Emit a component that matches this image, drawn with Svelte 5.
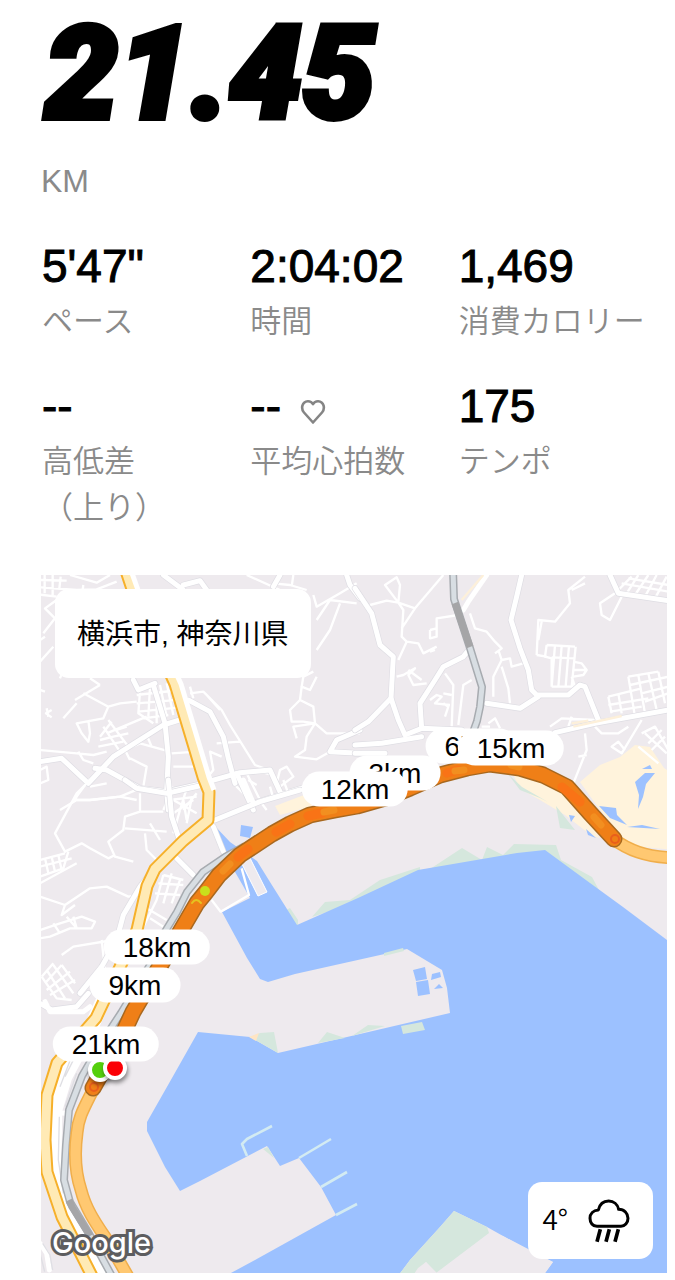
<script>
  const stats = [
    { value: `5'47"`, label: 'ペース' },
    { value: '2:04:02', label: '時間' },
    { value: '1,469', label: '消費カロリー' },
    { value: '--', label: '高低差（上り）' },
    { value: '--', label: '平均心拍数', heart: true },
    { value: '175', label: 'テンポ' }
  ];

  const mapWidth = 626;
  const mapHeight = 698;
  // Marker centres, in map units
  const markers = [
    { text: '3km', x: 354, y: 198 },
    { text: '12km', x: 314, y: 214 },
    { text: '6km', x: 430, y: 171 },
    { text: '15km', x: 470, y: 173 },
    { text: '18km', x: 116, y: 372 },
    { text: '9km', x: 94, y: 410 },
    { text: '21km', x: 65, y: 469 }
  ];

  const route =
    'M93 1088 L120 1040 L133 1012 L183 927 L197 903 L206 892 L219 875 L240 855 L272 834 L290 824 L310 815 L335 810 L357 806 L385 798 L410 788 L440 775 L467 768 L490 764 L520 768 L543 775 L567 787 L590 813 L614 839';
  const highwaySouth =
    'M93 1090 C84 1108 78 1118 77 1133 C74 1155 75 1172 81 1190 C86 1210 97 1225 107 1240 L130 1280';
  const highwayEast = 'M612 838 C628 850 645 857 675 858';
  const yellowRoad =
    'M124 565 L133 592 L175 684 L203 777 L209 792 L208 820 L183 841 L155 869 L147 886 L137 930 L120 967 L96 1018 L57 1063 L47 1095 L45 1140 L47 1172 L62 1217 L94 1280';
  const coastRail =
    'M245 846 L225 857 L203 872 L187 892 L177 912 L166 930 L150 965 L121 1013 L100 1045 L82 1076 L69 1110 L66 1145 L64 1180 L70 1202 L88 1232 L114 1280';
  const hillRail = 'M453 570 L454 599 L470 648 L482 687 L480 707 L477 721 L472 735';
</script>

<main class="run">
  <h1 class="distance">21.45</h1>
  <p class="unit">KM</p>

  <dl class="stats">
    {#each stats as stat}
      <div class="stat">
        <dd class="value">
          <span>{stat.value}</span>
          {#if stat.heart}
            <svg class="heart" viewBox="0 0 26 26" aria-hidden="true">
              <path d="M13 23.5 L4 13.5 C0.5 9.3 2.2 2.5 7.8 2.2 C10.2 2.1 12 3.4 13 5.2 C14 3.4 15.8 2.1 18.2 2.2 C23.8 2.5 25.5 9.3 22 13.5 Z" />
            </svg>
          {/if}
        </dd>
        <dt class="label">{stat.label}</dt>
      </div>
    {/each}
  </dl>

  <section class="map" aria-label="ルート">
    <svg class="canvas" viewBox="41 575 626 698" aria-hidden="true">
      <rect class="land" x="41" y="575" width="626" height="698" />

      <!-- sand and parks -->
      <path class="sand" d="M580 782 L600 765 L620 757 L635 745 L650 747 L664 768 L675 775 L675 850 L630 846 L600 810 Z" />
      <path class="sand" d="M512 772 L545 782 L570 795 L600 838 L592 836 L565 815 L540 800 L520 789 Z" />
      <path class="sand" d="M275 806 L312 792 L312 806 L280 815 Z" />
      <path class="park" d="M508 774 L522 787 L548 802 L540 798 L520 790 Z M556 806 L575 830 L560 828 Z" />
      <path class="park" d="M430 869 L462 848 L482 860 L487 847 L503 855 L514 844 L556 845 L561 860 L592 877 L600 892 L545 856 Z" />
      <path class="park" d="M312 917 L325 902 L350 900 L380 880 L420 867 L420 873 L358 902 Z" />
      <path class="park" d="M286 910 L290 908 L298 920 L298 930 L291 921 Z" />
      <path class="water" d="M655 773 L646 784 L643 797 L638 809 L639 795 L635 782 L645 773 Z M642 769 L650 765 L652 769 Z M599 806 L616 808 L617 815 L627 825 L610 818 Z M627 827 L642 825 L660 829 Z M569 815 L575 816 L571 822 Z M586 829 L596 838 L588 835 Z" />

      <!-- bay -->
      <path class="water" d="M213 824 L230 842 L257 861 L270 882 L297 925 L358 898 L418 870 L517 853 L545 850 L590 883 L623 907 L675 946 L675 1280 L540 1280 L553 1262 L528 1250 L503 1236 L487 1227 L454 1211 L440 1227 L410 1260 L395 1280 L218 1280 L255 1260 L336 1215 L321 1187 L299 1158 L280 1166 L267 1146 L200 1181 L180 1191 L165 1167 L147 1131 L147 1122 L172 1078 L198 1032 L250 1037 L278 1053 L347 1037 L450 1013 L447 988 L442 970 L407 949 L295 974 L268 982 L260 979 L247 958 L222 912 L250 898 L242 884 L224 853 Z" />
      <path class="water" d="M241 825 L253 827 L250 838 L240 836 Z" />
      <path class="quay" d="M239 858 L250 858 L267 892 L258 896 Z" />
      <path class="park" d="M384 953 L403 948 L404 951 L384 956 Z M250 1037 L260 1033 L274 1032 L278 1053 Z M318 1043 L327 1032 L345 1038 Z M352 1036 L368 1025 L385 1026 Z M401 1026 L422 1022 L425 1030 L403 1034 Z M263 1149 L268 1147 L274 1158 Z" />
      <path class="sand-deep" d="M249 1037 L259 1033 L256 1041 Z" />
      <path class="park" d="M395 1280 L410 1260 L440 1227 L454 1211 L487 1227 L489 1233 L436 1273 L426 1262 L418 1268 L410 1280 Z" />
      <path class="land" d="M410 1280 L426 1262 L437 1273 L490 1233 L503 1236 L553 1262 L540 1280 Z" />
      <path class="water" d="M413 970 L425 967 L427 979 L416 981 Z M416 982 L428 980 L430 994 L418 996 Z M432 974 L440 972 L441 977 L431 980 Z M434 989 L439 984 L443 988 Z" />
      <path class="pier" d="M247 1156 L242 1144 L247 1139 L272 1126 M299 1158 L331 1139 M321 1187 L347 1172 M336 1215 L357 1204" />

      <!-- hillside streets, north west -->
      <g transform="translate(40 570) scale(0.33333)">
        <g class="street">
          <path d="M0 52 L110 60 L170 58 L230 35 M0 30 L80 32 M0 74 L50 80 M14 15 V70 M38 15 V75 M62 20 L58 56 M130 45 L128 60 M90 15 L170 38 L210 15" />
          <path d="M50 90 L15 115 L45 145 L10 190 M0 275 L40 230 M15 200 L0 210 M0 360 L15 365 M35 420 L18 430 L35 442 M20 415 L25 440" />
          <path d="M60 325 L70 300 M105 390 L180 345 M130 370 L205 410 L240 400 L290 395 M205 410 L190 445 L110 460 L125 490 L145 515 L150 490 L145 450 M110 400 L70 445 M180 345 L150 325" />
          <path d="M300 365 L295 430 L340 460 M330 350 L325 440 M290 375 L420 360 M290 400 L430 388 M295 425 L420 412 M380 340 L400 435 M360 345 L380 440 M310 445 L385 435 M350 370 L350 460" />
          <path d="M205 450 L265 530 M190 470 L240 545 M180 510 L220 500 L265 490 M175 530 L250 515 M215 455 L180 500 M320 440 L200 490 M230 480 L260 470" />
          <path d="M0 540 L110 550 L160 555 L200 545 M115 545 L130 570 L160 580 M270 570 L255 540 L300 520 L390 545 M270 565 L320 590 L310 650 M320 495 L335 530" />
          <path d="M450 370 L490 365 L545 420 L570 465 L645 585 L700 605 M450 350 L460 385 M500 375 L540 420 M530 520 L600 515 M395 550 L470 545 M400 590 L470 590 M545 560 L510 545 L520 600 L500 625" />
          <path d="M620 610 L665 700 L680 720 M640 600 L700 615 M720 650 L760 620 L740 590 L720 600 L710 640 M585 645 L640 700" />
          <path d="M150 625 L110 680 L105 690 L150 690 L240 680 L300 655 M110 690 L60 720 M0 600 L20 590 L25 630 L0 640 M150 650 L200 640" />
          <path d="M820 75 L830 110 L900 70 L950 40 M830 150 L870 90 L950 100 M830 240 L870 180 L900 100 M700 40 L750 45 L800 60 M760 15 L755 50 M620 15 L720 60" />
          <path d="M820 305 L790 320 L785 350 L810 360 L830 320 M785 350 L780 390 L820 410 L825 460 L760 470 L770 505 M780 390 L750 420 L755 455 L790 455 L825 460 L860 490 L960 490 M825 460 L800 500 L795 540 L765 560 L830 568 L870 545" />
          <path d="M400 650 L370 720 M440 655 L420 720 M390 690 L470 680 M430 720 L470 670" />
        </g>
        <g class="avenue-edge">
          <path d="M0 575 L65 565 L145 640 L220 560 L370 465 L425 448" />
          <path d="M165 595 L200 600 L300 655 L380 665 L490 640" />
          <path d="M340 345 L375 460 L385 560 L380 665 L385 720" />
          <path d="M280 330 L295 360 L345 340 M445 390 L510 425 L550 500 L565 565 L585 640" />
          <path d="M515 632 L600 608 L690 600 L720 665 M590 610 L640 720 M640 700 L800 650" />
          <path d="M370 15 L430 60 M430 45 L480 32 L500 60 M920 15 L930 45 L960 85 M700 50 L720 15 M960 480 L890 510 L870 545 L960 550" />
        </g>
        <g class="avenue">
          <path d="M0 575 L65 565 L145 640 L220 560 L370 465 L425 448" />
          <path d="M165 595 L200 600 L300 655 L380 665 L490 640" />
          <path d="M340 345 L375 460 L385 560 L380 665 L385 720" />
          <path d="M280 330 L295 360 L345 340 M445 390 L510 425 L550 500 L565 565 L585 640" />
          <path d="M515 632 L600 608 L690 600 L720 665 M590 610 L640 720 M640 700 L800 650" />
          <path d="M370 15 L430 60 M430 45 L480 32 L500 60 M920 15 L930 45 L960 85 M700 50 L720 15 M960 480 L890 510 L870 545 L960 550" />
        </g>
      </g>

      <!-- hillside streets, north east -->
      <g transform="translate(355 570) scale(0.33333)">
        <g class="street">
          <path d="M45 105 L95 92 L130 98 L180 115 L265 15 M130 98 L90 45 L125 22 L135 45 L130 98 L145 120 L140 200 L155 215 L130 270 M180 115 L140 175 M155 215 L190 220 L205 250 L245 230 M225 245 L240 240" />
          <path d="M225 180 L245 175 L245 145 L310 135 M225 180 L225 205 L245 200 L245 175 M125 320 L145 315 L180 295 L160 315 L175 345 L215 340 M200 330 L160 300" />
          <path d="M225 390 L245 375 L260 380 L240 400 L285 405 M265 370 L290 375 M270 310 L295 345 L290 470 M265 400 L280 410 L270 440 M310 465 L325 345 L350 330" />
          <path d="M345 130 L360 175 L395 185 L420 215 L440 235 L420 250 M430 240 L440 270 L415 320 L415 380 M440 270 L465 265 L470 290 L505 280 M440 290 L460 355 L465 400" />
          <path d="M545 255 L550 150 L600 155 L645 100 L640 60 L690 20 M545 255 L575 260 M690 40 L650 60 M560 155 L550 210" />
          <path d="M575 225 L660 230 M575 225 L570 260 L590 265 L590 350 M600 225 L590 350 M620 228 L610 352 M642 228 L632 350 M662 230 L650 350 M590 350 L660 350 L650 320 M590 262 L660 265 M655 275 L680 280 L695 300 L685 315 L655 320 M655 300 L695 300" />
          <path d="M780 70 L735 100 L740 135 L765 150 L800 80 M790 60 L830 20 M815 70 L850 15 M840 75 L880 15 M870 80 L905 15 M900 85 L935 20 M800 40 L940 65 M820 25 L940 45" />
          <path d="M760 380 L860 355 M760 405 L880 385 M765 425 L860 410 M760 380 L770 430 M790 370 L800 430 M820 320 L840 440 M820 320 L910 305 M850 315 L870 430 M880 310 L905 420 M825 345 L940 320 M860 370 L940 350 M870 395 L940 370 M910 305 L930 400" />
          <path d="M585 470 L620 445 L720 450 M640 470 L650 440 M720 470 L740 490 L790 490 L820 470 M860 450 L800 550 L770 530 L790 515 L810 540 M870 490 L935 550 M880 520 L920 480 M890 540 L930 500 M860 490 L900 470 L940 540 M850 530 L910 580 M690 490 L695 540 L655 640 M695 555 L670 560" />
          <path d="M400 460 L420 445 L435 475 M405 470 L380 470" />
        </g>
        <g class="avenue-edge">
          <path d="M0 55 L50 130 L75 225 L115 260 L108 385 L130 450 L150 495 L200 475 L320 480" />
          <path d="M108 385 L40 455 L0 480 M200 475 L195 400 L240 330 L265 290 L325 260 L345 235" />
          <path d="M500 15 L485 80 L468 150 L495 235 L520 300 L530 360 L545 375 L640 375 L675 345 L690 350 L730 450 M395 400 L450 408 L495 415 L550 380" />
          <path d="M765 15 L790 70 L940 92 M0 525 L80 520 L200 500 M0 550 L90 550 M600 488 L720 460 L940 420" />
        </g>
        <g class="avenue">
          <path d="M0 55 L50 130 L75 225 L115 260 L108 385 L130 450 L150 495 L200 475 L320 480" />
          <path d="M108 385 L40 455 L0 480 M200 475 L195 400 L240 330 L265 290 L325 260 L345 235" />
          <path d="M500 15 L485 80 L468 150 L495 235 L520 300 L530 360 L545 375 L640 375 L675 345 L690 350 L730 450 M395 400 L450 408 L495 415 L550 380" />
          <path d="M765 15 L790 70 L940 92 M0 525 L80 520 L200 500 M0 550 L90 550 M600 488 L720 460 L940 420" />
          <path d="M395 15 L340 95 L325 120" />
        </g>
        <path class="ramp" d="M385 15 L320 90 M650 460 L700 452 M655 470 L800 438" />
      </g>

      <!-- western streets -->
      <g transform="translate(40 780) scale(0.33333)">
        <g class="street">
          <path d="M150 0 L110 40 L45 160 L75 215 L125 190 L150 205 L205 235 L225 225 M110 60 L150 60 L240 50 L290 60 M300 40 L300 95 L255 110 L250 150 L205 185 L225 230 L280 245 M300 95 L370 95 M255 145 L380 155 M315 160 L320 210 L350 240 M330 130 L360 180" />
          <path d="M0 240 L75 220 M0 260 L95 235 M0 290 L70 265 L85 215 M15 235 L25 280 M35 230 L45 275 M55 225 L65 270 M0 310 L110 250" />
          <path d="M0 350 L75 375 L150 325 L200 320 L265 350 L300 345 M75 375 L65 405 L105 375 M0 450 L60 430 L125 410 L165 425 L155 445 L90 445 L30 470 L0 475 M40 430 L60 460 M100 410 L110 445 L80 410" />
          <path d="M65 525 L100 500 L220 480 M185 480 L195 570 L150 600" />
          <path d="M40 550 L5 590 M65 555 L15 610 M90 575 L20 630 M105 600 L30 645 M5 590 L50 655 L95 660 M20 570 L75 655 M40 555 L100 640 M65 555 L105 610" />
          <path d="M370 285 L350 360 M395 280 L370 370 M420 300 L395 370 M355 310 L430 315 M345 340 L420 345 M370 285 L430 300 M350 360 L310 440 M320 385 L380 420 M330 415 L370 440" />
          <path d="M400 60 L470 100 M420 90 L400 160 M430 60 L440 120 M455 55 L440 130 M400 100 L460 60 M690 20 L700 55 M730 0 L745 40 M650 15 L625 0" />
        </g>
        <g class="avenue-edge">
          <path d="M255 0 L290 25 L380 40 L490 15 M385 0 L395 110 L420 185 M525 120 L660 65 L780 30" />
          <path d="M335 275 L300 320 L250 405 L230 480 L185 560 L120 640 M410 235 L460 285 M520 140 L550 215" />
          <path d="M0 670 L35 690 L110 680 L145 640" />
        </g>
        <g class="avenue">
          <path d="M255 0 L290 25 L380 40 L490 15 M385 0 L395 110 L420 185 M525 120 L660 65 L780 30 M610 0 L640 70" />
          <path d="M335 275 L300 320 L250 405 L230 480 L185 560 L120 640 M410 235 L460 285 M520 140 L550 215" />
          <path d="M0 670 L35 690 L110 680 L145 640" />
        </g>
        <path class="street" d="M605 265 L627 345 L542 395 L515 360" />
      </g>

      <!-- coastal strip -->
      <g transform="translate(40 1000) scale(0.33333)">
        <path class="strip" d="M190 0 L150 90 L75 230 L45 330 L42 500 L70 620 L120 700 L180 830" />
        <path class="avenue" d="M15 5 L30 35 L130 35 L150 20 M20 335 L75 340 M15 405 L45 405" />
        <path class="lane" d="M140 100 L75 230 M110 220 L75 320 M60 260 L110 130 L150 90 M58 350 L55 480 L70 580" />
        <path class="avenue" d="M0 730 L20 760 L28 810" />
        <path class="lane" d="M8 730 L30 765 L38 810 M0 760 L14 815" />
      </g>

      <!-- railways -->
      <path class="rail-edge" d={hillRail} />
      <path class="rail" d={hillRail} />
      <path class="rail-dark" d="M455 603 L470 647" />
      <path class="rail-edge" d={coastRail} />
      <path class="rail" d={coastRail} />
      <path class="rail-dark" d="M69 1200 L72 1207 L90 1236" />

      <!-- trunk roads -->
      <path class="trunk-edge" d={yellowRoad} />
      <path class="trunk" d={yellowRoad} />
      <path class="trunk-side" d="M128 562 L138 590 L181 684 L209 777 L214 790" />
      <path class="highway-edge" d={highwaySouth} />
      <path class="highway" d={highwaySouth} />
      <path class="highway-edge" d={highwayEast} />
      <path class="highway" d={highwayEast} />

      <!-- recorded run -->
      <path class="route-edge" d={route} />
      <path class="route" d={route} />
      <path class="route-fast" d="M238 857 L248 849 M276 832 L290 824 M308 816 L322 813 M395 793 L404 790 M447 773 L458 770 M562 787 L580 802" />
      <path class="route-slow" d="M223 871 L230 864 M324 812 L334 810 M455 771 L464 770 M511 765 L519 767 M594 817 L601 825" />
      <path class="route-mark" d="M192 903 Q196 897 201 903" />
      <circle class="route-spot" cx="205" cy="891" r="5" />
      <circle class="route-loop" cx="615" cy="839" r="4" />
      <circle class="route-loop" cx="94" cy="1087" r="4" />
    </svg>

    <span class="dot start"></span>
    <span class="dot finish"></span>

    {#each markers as marker}
      <span
        class="marker"
        style:left="{(marker.x / mapWidth) * 100}%"
        style:top="{(marker.y / mapHeight) * 100}%"
      >{marker.text}</span>
    {/each}

    <div class="place">横浜市, 神奈川県</div>
    <span class="google">Google</span>

    <div class="weather">
      <span class="degrees">4°</span>
      <svg class="rain" viewBox="503 178 126 132" role="img" aria-label="雨">
        <path d="M530 260 C517 260 509 249 509 236 C509 222 519 212 534 211 C538 194 550 184 565 184 C580 184 592 194 595 209 C612 209 623 221 623 236 C623 250 613 260 602 260 Z" />
        <path class="drops" d="M540 269 L530 306 M567 269 L557 306 M594 269 L584 306" />
      </svg>
    </div>
  </section>
</main>

<style>
  :global(body) {
    background: #fff;
  }

  .run {
    padding: 0 8px 7px 41px;
    font-family: 'Liberation Sans', 'Noto Sans CJK JP', sans-serif;
    color: #000;
  }

  .distance {
    margin: 0;
    padding-left: 4px;
    font-family: Roboto, sans-serif;
    font-size: 130px;
    font-style: italic;
    font-weight: 900;
    line-height: 148px;
    -webkit-text-stroke: 6px #000;
  }

  .unit {
    margin: 10px 0 0;
    color: #8a8a8a;
    font-size: 32px;
    line-height: 46px;
  }

  .stats {
    display: grid;
    grid-template-columns: repeat(3, 1fr);
    row-gap: 36px;
    margin: 34px 0 47px 1px;
  }

  .stat {
    display: flex;
    flex-direction: column;
    gap: 2px;
  }

  .value {
    display: flex;
    align-items: center;
    gap: 19px;
    margin: 0;
    font-size: 46px;
    line-height: 56px;
    -webkit-text-stroke: 1px #000;
  }

  .heart {
    width: 26px;
    height: 26px;
    margin-top: 12px;
    fill: none;
    stroke: #858585;
    stroke-width: 2.6;
    stroke-linejoin: round;
  }

  .label {
    max-width: 190px;
    color: #8a8a8a;
    font-family: 'Noto Sans CJK JP', sans-serif;
    font-size: 31px;
    font-weight: 350;
    line-height: 46px;
  }

  .stat:nth-child(4) .label {
    max-width: 140px;
  }

  .map {
    position: relative;
    aspect-ratio: 626 / 698;
    overflow: hidden;
    font-size: 28px;
  }

  .canvas {
    display: block;
    width: 100%;
    height: 100%;
  }

  .canvas path {
    stroke-linejoin: round;
  }

  .land { fill: #eeeaee; }
  .water { fill: #9cc1ff; }
  .park { fill: #d5e7dd; }
  .sand { fill: #fff3dc; }
  .sand-deep { fill: #ffe5c4; }
  .quay { fill: #eeeaee; stroke: #fff; stroke-width: 1; }

  .pier,
  .street,
  .avenue,
  .avenue-edge,
  .strip,
  .lane,
  .ramp,
  .rail,
  .rail-edge,
  .rail-dark,
  .trunk,
  .trunk-edge,
  .trunk-side,
  .highway,
  .highway-edge,
  .route,
  .route-edge,
  .route-fast,
  .route-slow,
  .route-mark,
  .route-loop {
    fill: none;
  }

  .pier { stroke: #d3ebf2; stroke-width: 2.6; }
  .street { stroke: #fff; stroke-width: 7; }
  .avenue-edge { stroke: #dedde3; stroke-width: 19; stroke-linecap: round; }
  .avenue { stroke: #fff; stroke-width: 15; stroke-linecap: round; }
  .strip { stroke: #fff; stroke-width: 44; }
  .lane { stroke: #dfdfe4; stroke-width: 4; }
  .ramp { stroke: #fdf0da; stroke-width: 7; }
  .rail-edge { stroke: #a7abb0; stroke-width: 8; }
  .rail { stroke: #d8dee3; stroke-width: 5; }
  .rail-dark { stroke: #a5a5a7; stroke-width: 7; }
  .trunk-side { stroke: #fff; stroke-width: 5; }
  .trunk-edge { stroke: #f6b02a; stroke-width: 13; }
  .trunk { stroke: #ffeab5; stroke-width: 9; }
  .highway-edge { stroke: #f0ae4b; stroke-width: 13; }
  .highway { stroke: #ffc871; stroke-width: 10; }
  .route-edge { stroke: #a8681f; stroke-width: 17; stroke-linecap: round; }
  .route { stroke: #ef7f17; stroke-width: 14; stroke-linecap: round; }
  .route-fast { stroke: #f97316; stroke-width: 9; stroke-linecap: round; }
  .route-slow { stroke: #f28f20; stroke-width: 7; stroke-linecap: round; }
  .route-mark { stroke: #e5c31f; stroke-width: 2; stroke-linecap: round; }
  .route-spot { fill: #c9e01c; }
  .route-loop { stroke: #e95f1c; stroke-width: 2; }

  .marker {
    position: absolute;
    padding: 0 19px;
    border-radius: 18px;
    background: #fff;
    line-height: 35px;
    transform: translate(-50%, -50%);
  }

  .dot {
    position: absolute;
    width: 16px;
    height: 16px;
    border: 4px solid #fff;
    border-radius: 50%;
    box-shadow: 1px 3px 4px rgb(0 0 0 / 45%);
  }

  .start {
    left: 7.5%;
    top: 69.2%;
    background: #55cf0d;
  }

  .finish {
    left: 9.9%;
    top: 68.9%;
    background: #fb0006;
  }

  .place {
    position: absolute;
    top: 14px;
    left: 14px;
    padding: 2px 22px 0;
    border-radius: 14px;
    background: #fff;
    line-height: 87px;
    white-space: nowrap;
  }

  .google {
    position: absolute;
    bottom: 10px;
    left: 11px;
    color: #fff;
    font-family: Inter, sans-serif;
    font-size: 29px;
    font-weight: 500;
    line-height: 40px;
    -webkit-text-stroke: 6px #5d5d5f;
    paint-order: stroke fill;
  }

  .weather {
    position: absolute;
    right: 14px;
    bottom: 14px;
    display: flex;
    align-items: center;
    gap: 20px;
    padding: 0 23px 0 14px;
    border-radius: 14px;
    background: #fff;
    font-family: 'Noto Sans CJK JP', sans-serif;
    font-weight: 350;
  }

  .degrees {
    padding-bottom: 4px;
    line-height: 73px;
  }

  .rain {
    width: 42px;
    height: 44px;
    fill: none;
    stroke: #000;
    stroke-width: 9;
    stroke-linejoin: round;
  }

  .drops {
    stroke-width: 11;
  }
</style>
